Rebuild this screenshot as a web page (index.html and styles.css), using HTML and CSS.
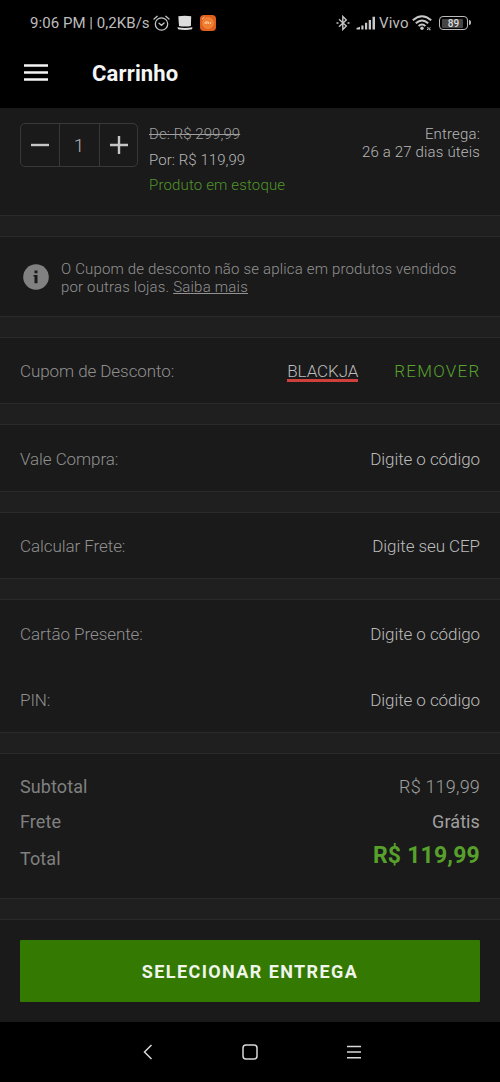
FILE: index.html
```html
<!DOCTYPE html>
<html lang="pt-BR">
<head>
<meta charset="utf-8">
<title>Carrinho</title>
<link rel="stylesheet" href="styles.css">
</head>
<body>
<div class="status">
  <div class="status-left">
    <span class="clock">9:06 PM | 0,2KB/s</span>
    <svg class="alarm" width="17" height="17" viewBox="0 0 17 17" fill="none" stroke="#c4c4c4" stroke-width="1.3" stroke-linecap="round"><circle cx="8.5" cy="9" r="6.2"/><path d="M6 8.3l2.5 2 2.6-2.3M1 4l3.2-2.7M16 4l-3.2-2.7"/></svg>
    <svg class="hat" width="16" height="16" viewBox="0 0 16 16" fill="#dedede"><path d="M1.3 1.2Q8 .2 14.2 1.2L13.9 11Q8 12 2 11z"/><path d="M.5 12.2Q8 13.6 15.5 12.2L15 14.3Q8 15.5 1 14.3z"/></svg>
    <svg class="app" width="16" height="16" viewBox="0 0 16 16"><rect width="16" height="16" rx="4" fill="#e0601c"/><circle cx="8" cy="8" r="5.3" fill="#f07d2c" stroke="#f5a060" stroke-width=".6"/><path d="M5.2 9V7h3.2v2M6.8 7.5V9M10.4 7v2" fill="none" stroke="#ffd8b4" stroke-width=".9"/><path d="M2 4.2L4.5 2" stroke="#ffd0a8"/></svg>
  </div>
  <div class="status-right">
    <svg class="bt" width="14" height="16" viewBox="0 0 14 16" fill="none" stroke="#c4c4c4" stroke-width="1.4"><path d="M3 4.2l7.3 6.8L6.8 14.5V1.5L10.3 5 3 11.8"/><path d="M.5 8h2M11.5 8h2"/></svg>
    <svg class="signal" width="20" height="14" viewBox="0 0 20 14" fill="#c8c8c8"><path d="M.5 12L4 10.8V13.5H.5zM5.3 9.5h2.2v4H5.3zM9 6.7h2.2v6.8H9zM12.7 4h2.3v9.5h-2.3zM16.5.8H19v12.7h-2.5z"/></svg>
    <span class="carrier">Vivo</span>
    <svg class="wifi" width="20" height="16" viewBox="0 0 20 16" fill="none" stroke="#c8c8c8" stroke-width="1.9"><path d="M.8 5.2Q10-2.8 19.2 5.2M3.8 8.2Q10 2.6 16.2 8.2M6.6 11Q10 7.8 13.4 11"/><circle cx="10" cy="13.3" r="1.7" fill="#c8c8c8" stroke="none"/><path d="M15 14.8l3.5-2.2M15 12.8h1.5M17 14.7h1.6" stroke-width="1"/></svg>
    <div class="battery"><span class="charge">89</span></div>
  </div>
</div>
<header class="topbar">
  <svg width="24" height="18" viewBox="0 0 24 18" stroke="#f5f5f5" stroke-width="2.4"><path d="M0 1.5h24M0 8.5h24M0 15.5h24"/></svg>
  <h1 class="title">Carrinho</h1>
</header>
<main>
  <section class="product">
    <div class="stepper">
      <div class="cell"><svg width="18" height="18" viewBox="0 0 18 18" stroke="#c6c6c6" stroke-width="2.4"><path d="M0 9h18"/></svg></div>
      <div class="cell qty">1</div>
      <div class="cell"><svg width="18" height="18" viewBox="0 0 18 18" stroke="#c6c6c6" stroke-width="2.4"><path d="M0 9h18M9 0v18"/></svg></div>
    </div>
    <div class="prices">
      <div><s class="old">De: R$ 299,99</s></div>
      <div class="now">Por: R$ 119,99</div>
      <div class="stock">Produto em estoque</div>
    </div>
    <div class="delivery">Entrega:<br>26 a 27 dias úteis</div>
  </section>
  <div class="gap"></div>
  <section class="notice">
    <svg width="26" height="26" viewBox="0 0 26 26"><circle cx="13" cy="13" r="12.8" fill="#818181"/><path d="M11.5 6.4h3v2.8h-3zM10.5 11h4v8.2h-3V12.5h-1z" fill="#1a1a1a"/></svg>
    <p class="notice-text">O Cupom de desconto não se aplica em produtos vendidos<br>por outras lojas. <span class="link">Saiba mais</span></p>
  </section>
  <div class="gap"></div>
  <section class="row coupon"><span class="label">Cupom de Desconto:</span><span class="code">BLACKJA</span><span class="remove">REMOVER</span></section>
  <div class="gap"></div>
  <section class="row tall"><span class="label">Vale Compra:</span><span class="field">Digite o código</span></section>
  <div class="gap"></div>
  <section class="row freight"><span class="label">Calcular Frete:</span><span class="field">Digite seu CEP</span></section>
  <div class="gap"></div>
  <section class="gift">
    <div class="row"><span class="label">Cartão Presente:</span><span class="field">Digite o código</span></div>
    <div class="row"><span class="label">PIN:</span><span class="field">Digite o código</span></div>
  </section>
  <div class="gap"></div>
  <section class="totals">
    <div class="sum first"><span>Subtotal</span><span class="sub">R$ 119,99</span></div>
    <div class="sum second"><span>Frete</span><span class="free">Grátis</span></div>
    <div class="sum third"><span>Total</span><strong class="grand">R$ 119,99</strong></div>
  </section>
  <div class="gap"></div>
  <section class="action"><button class="button">SELECIONAR ENTREGA</button></section>
</main>
<nav class="navbar">
  <svg width="10" height="16" viewBox="0 0 10 16" fill="none" stroke="#d8d8d8" stroke-width="1.5"><path d="M8.5 1L1.5 8l7 7"/></svg>
  <svg width="16" height="16" viewBox="0 0 16 16" fill="none" stroke="#d8d8d8" stroke-width="1.5"><rect x="1" y="1" width="14" height="14" rx="3"/></svg>
  <svg width="14" height="14" viewBox="0 0 14 14" stroke="#d8d8d8" stroke-width="1.4"><path d="M0 1.5h14M0 7h14M0 12.7h14"/></svg>
</nav>
</body>
</html>
```
FILE: styles.css
```css
* { box-sizing: border-box; }
body { margin: 0; width: 500px; height: 1082px; background: #000; color: #a0a0a0; font-family: Roboto, sans-serif; font-weight: 300; font-size: 17px; overflow: hidden; }
svg { display: block; flex: none; }
.status { height: 46px; padding: 0 30px; display: flex; justify-content: space-between; align-items: center; color: #bdbdbd; font-size: 15px; font-weight: 400; white-space: nowrap; }
.status-left, .status-right { display: flex; align-items: center; }
.clock { width: 119px; letter-spacing: 0.05px; }
.alarm { margin-left: 4px; }
.hat { margin-left: 7px; }
.app { margin-left: 7px; }
.signal { margin-left: 6px; }
.carrier { width: 30px; margin-left: 3px; letter-spacing: 0.2px; }
.wifi { margin-left: 3px; }
.battery { position: relative; width: 29px; height: 14px; margin: 0 2px 0 7px; border: 1.5px solid #bbb; border-radius: 4px; padding: 1.5px; display: flex; }
.battery::after { content: ""; position: absolute; right: -4px; top: 3px; width: 2px; height: 5px; background: #bbb; border-radius: 0 2px 2px 0; }
.charge { width: 21px; height: 9px; background: #444; border-radius: 1px; color: #ddd; font-size: 10px; font-weight: 500; line-height: 9px; text-align: center; padding-left: 3px; }
.topbar { height: 62px; padding: 0 24px 8px; display: flex; align-items: center; gap: 44px; }
.title { margin: 0; font-size: 22px; line-height: 28px; font-weight: 700; color: #f5f5f5; padding-top: 1px; letter-spacing: 0.15px; }
main { background: #1a1a1a; height: 914px; }
.gap { height: 22px; background: #1f1f1f; border: solid #2a2a2a; border-width: 1px 0; }
.product { height: 107px; padding: 15px 20px 0; display: flex; font-size: 15px; }
.stepper { width: 118px; height: 44px; border: 1.5px solid #383838; border-radius: 5px; display: grid; grid-template-columns: 38px 40px 1fr; }
.cell { display: flex; align-items: center; justify-content: center; }
.cell + .cell { border-left: 1px solid #383838; }
.qty { font-size: 19px; color: #b0b0b0; padding-right: 1px; }
.prices { margin: -1px 0 0 11px; line-height: 25.5px; white-space: nowrap; letter-spacing: 0.06px; }
.now { color: #b8b8b8; }
.stock { color: #4f9629; letter-spacing: 0.16px; }
.delivery { margin-left: auto; padding-top: 2px; text-align: right; line-height: 18px; color: #b8b8b8; letter-spacing: 0.16px; }
.notice { height: 79px; padding: 0 23px; display: flex; align-items: center; gap: 12px; }
.notice-text { margin: 2px 0 0; font-size: 15px; line-height: 18px; color: #929292; white-space: nowrap; letter-spacing: 0.17px; }
.link { text-decoration: underline; letter-spacing: 0.22px; }
.row { height: 66px; padding: 0 20px; display: flex; align-items: center; justify-content: space-between; white-space: nowrap; letter-spacing: -0.07px; }
.coupon { height: 65px; }
.tall { padding-top: 1px; }
.freight { height: 65px; padding-top: 1px; }
.label { color: #909090; }
.field { color: #bcbcbc; }
.code { margin-left: auto; margin-right: 36px; color: #bcbcbc; border-bottom: 3px solid #ce403b; line-height: 16px; padding-top: 3px; letter-spacing: -0.1px; }
.remove { color: #57a32e; letter-spacing: 1.25px; margin-right: -0.5px; }
.gift { height: 132px; padding-top: 1px; }
.totals { height: 144px; padding: 15px 20px 0; font-size: 18px; font-weight: 400; color: #808080; letter-spacing: 0.1px; }
.sum { display: flex; justify-content: space-between; align-items: center; }
.first { height: 34px; }
.second { height: 37px; }
.third { height: 37px; }
.sub { font-weight: 300; color: #a0a0a0; letter-spacing: 0.2px; }
.free { color: #a0a0a0; }
.grand { font-size: 23px; font-weight: 700; color: #57a02c; padding-bottom: 7px; letter-spacing: 0.2px; }
.action { padding: 20px 20px 0; }
.button { display: block; width: 460px; height: 62px; border: 0; border-radius: 1px; background: #337902; color: #f0f5ec; font: 700 18px Roboto, sans-serif; letter-spacing: 1.4px; }
.navbar { height: 60px; padding: 0 139px 0 143px; display: flex; align-items: center; justify-content: space-between; }
```
